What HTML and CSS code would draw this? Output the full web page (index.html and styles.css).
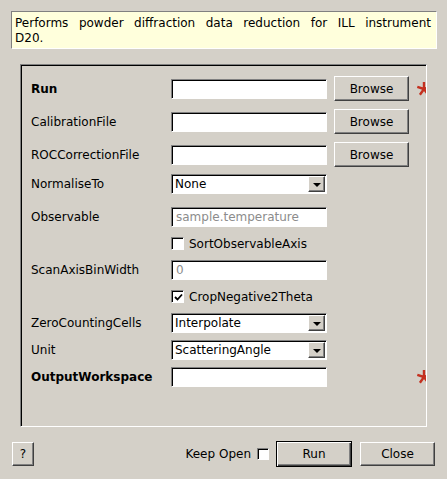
FILE: index.html
```html
<!DOCTYPE html>
<html>
<head>
<meta charset="utf-8">
<link rel="stylesheet" href="styles.css">
</head>
<body>
<div class="desc"><span class="line1">Performs powder diffraction data reduction for ILL instrument</span>D20.</div>

<div class="frame">
  <div class="rows">
    <div class="row tall">
      <span class="lbl bold">Run</span>
      <div class="field"></div>
      <button class="btn">Browse</button>
      <svg class="star" viewBox="0 0 16 16"><path d="M8 8L8 1M8 8L1.3 5.8M8 8L3.9 13.7M8 8L12.1 13.7M8 8L14.7 5.8"/></svg>
    </div>
    <div class="row tall">
      <span class="lbl">CalibrationFile</span>
      <div class="field"></div>
      <button class="btn">Browse</button>
    </div>
    <div class="row tall">
      <span class="lbl">ROCCorrectionFile</span>
      <div class="field"></div>
      <button class="btn">Browse</button>
    </div>
    <div class="row">
      <span class="lbl">NormaliseTo</span>
      <div class="combo"><span>None</span><span class="arrow"></span></div>
    </div>
    <div class="row obs">
      <span class="lbl">Observable</span>
      <div class="field"><span class="ph">sample.temperature</span></div>
    </div>
    <div class="row chk-row">
      <span></span>
      <label class="chk"><span class="box"></span>SortObservableAxis</label>
    </div>
    <div class="row">
      <span class="lbl">ScanAxisBinWidth</span>
      <div class="field"><span class="ph">0</span></div>
    </div>
    <div class="row chk-row">
      <span></span>
      <label class="chk"><span class="box"><svg viewBox="0 0 9 9"><path d="M1 4L3.5 6.5L8 1.5"/></svg></span>CropNegative2Theta</label>
    </div>
    <div class="row">
      <span class="lbl">ZeroCountingCells</span>
      <div class="combo"><span>Interpolate</span><span class="arrow"></span></div>
    </div>
    <div class="row">
      <span class="lbl">Unit</span>
      <div class="combo"><span>ScatteringAngle</span><span class="arrow"></span></div>
    </div>
    <div class="row">
      <span class="lbl bold">OutputWorkspace</span>
      <div class="field"></div>
      <span></span>
      <svg class="star" viewBox="0 0 16 16"><path d="M8 8L8 1M8 8L1.3 5.8M8 8L3.9 13.7M8 8L12.1 13.7M8 8L14.7 5.8"/></svg>
    </div>
  </div>
</div>

<div class="footer">
  <button class="btn help">?</button>
  <div class="spacer"></div>
  <span class="keep">Keep Open</span>
  <span class="box keepbox"></span>
  <button class="btn default">Run</button>
  <button class="btn close">Close</button>
</div>
</body>
</html>
```

FILE: styles.css
```css
html, body {
  margin: 0;
  padding: 0;
}
body {
  width: 447px;
  height: 479px;
  background: #d4d0c8;
  font-family: "DejaVu Sans", sans-serif;
  font-size: 12px;
  color: #000;
  overflow: hidden;
}

.desc {
  margin: 11px 10px 0 11px;
  border: 1px solid;
  border-color: #808080 #fff #fff #808080;
  background: #ffffdc;
  padding: 4px 5px 2px 3px;
  line-height: 15px;
}
.line1 {
  display: block;
  text-align: justify;
  text-align-last: justify;
}

.frame {
  box-sizing: border-box;
  margin: 15px 0 0 20px;
  width: 407px;
  height: 363px;
  border: 1px solid;
  border-color: #808080 #fff #fff #808080;
  box-shadow: inset 1px 1px 0 #000;
  overflow: hidden;
}
.rows {
  display: flex;
  flex-direction: column;
  gap: 7px;
  padding: 11px 0 0 10px;
}
.row {
  display: grid;
  grid-template-columns: 133px 156px 75px 16px;
  column-gap: 7px;
  align-items: center;
  height: 20px;
}
.row.tall { height: 25px; }
.row.tall + .row.tall { margin-top: 1px; }
.row.obs { margin-top: 6px; }
.row.chk-row { height: 19px; }

.lbl {
  white-space: nowrap;
}
.bold { font-weight: bold; }

.field, .combo {
  box-sizing: border-box;
  height: 20px;
  background: #fff;
  border: 1px solid;
  border-color: #808080 #fff #fff #808080;
  box-shadow: inset 1px 1px 0 #000;
  display: flex;
  align-items: center;
  padding-left: 4px;
  white-space: nowrap;
  overflow: hidden;
}
.ph { color: #8c8c8c; }
.combo {
  justify-content: space-between;
  padding-left: 3px;
  padding-right: 1px;
}
.arrow {
  box-sizing: border-box;
  width: 17px;
  height: 16px;
  background: #d4d0c8;
  border: 1px solid;
  border-color: #fff #404040 #404040 #fff;
  box-shadow: inset -1px -1px 0 #808080;
  display: flex;
  align-items: center;
  justify-content: center;
}
.arrow::after {
  content: "";
  border-left: 4px solid transparent;
  border-right: 4px solid transparent;
  border-top: 4px solid #000;
  margin-top: 1px;
}

.btn {
  box-sizing: border-box;
  font-family: "DejaVu Sans", sans-serif;
  font-size: 12px;
  color: #000;
  background: #d4d0c8;
  border: 1px solid;
  border-color: #fff #404040 #404040 #fff;
  box-shadow: inset -1px -1px 0 #808080;
  padding: 0;
  height: 25px;
  width: 75px;
}

.star {
  width: 16px;
  height: 16px;
  fill: none;
  stroke: #c4301f;
  stroke-width: 2.4;
}

.chk {
  display: flex;
  align-items: center;
  gap: 5px;
  white-space: nowrap;
}
.box {
  box-sizing: border-box;
  width: 13px;
  height: 13px;
  background: #fff;
  border: 1px solid;
  border-color: #808080 #fff #fff #808080;
  box-shadow: inset 1px 1px 0 #000;
  display: flex;
  align-items: center;
  justify-content: center;
  flex: none;
}
.box svg {
  width: 9px;
  height: 9px;
  fill: none;
  stroke: #000;
  stroke-width: 1.8;
  margin: 1px 0 0 1px;
}

.footer {
  display: flex;
  align-items: center;
  height: 26px;
  margin-top: 14px;
  padding: 0 12px;
}
.spacer { flex: 1; }
.btn.help {
  width: 22px;
  height: 24px;
}
.keep { margin-right: 6px; }
.keepbox {
  width: 12px;
  height: 12px;
  margin-right: 7px;
}
.btn.default {
  width: 76px;
  height: 26px;
  border: 1px solid #000;
  box-shadow: inset 1px 1px 0 #fff, inset -1px -1px 0 #404040, inset -2px -2px 0 #808080;
  margin-right: 8px;
}
.btn.close {
  width: 75px;
  height: 24px;
}
```
